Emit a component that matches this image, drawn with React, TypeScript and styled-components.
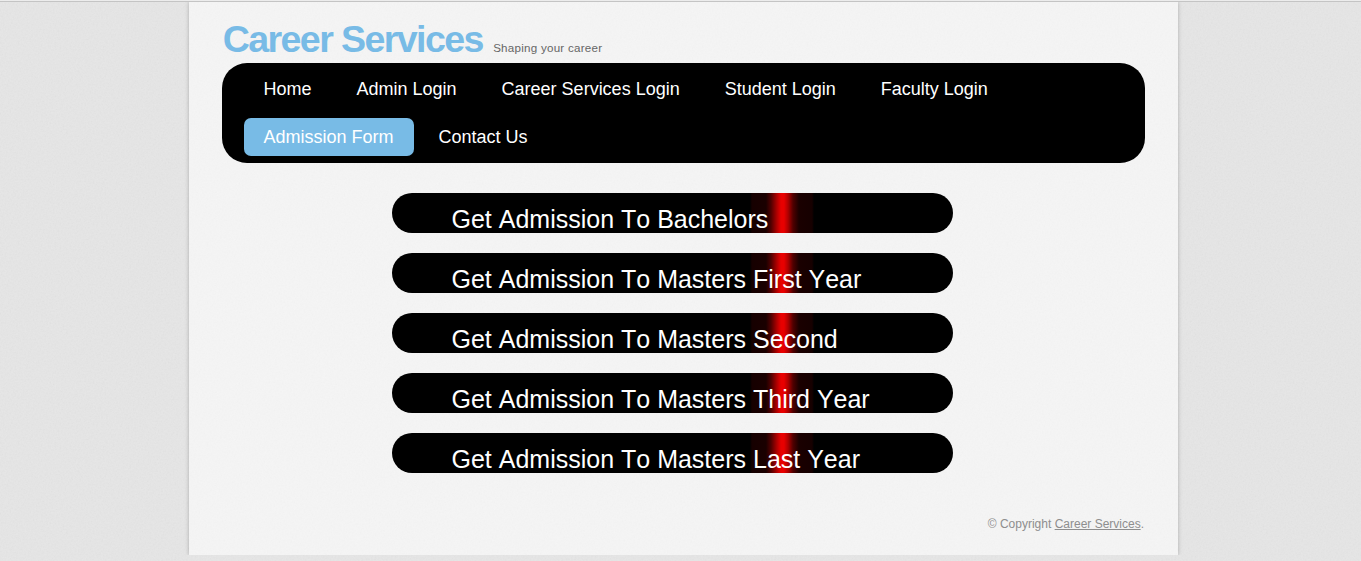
import React from "react";
import styled, { createGlobalStyle } from "styled-components";

const GlobalStyle = createGlobalStyle`
  * { box-sizing: border-box; }
  body {
    margin: 0;
    background: #e1e1e1;
    font-family: "Liberation Sans", Arial, sans-serif;
    overflow: hidden;
  }
`;

/* Fine paper grain tiled over the page background. */
const grain = (opacity: number) =>
  `url("data:image/svg+xml,%3Csvg xmlns='http://www.w3.org/2000/svg' width='200' height='200'%3E%3Cfilter id='n'%3E%3CfeTurbulence type='fractalNoise' baseFrequency='0.6' numOctaves='2' stitchTiles='stitch'/%3E%3CfeColorMatrix type='saturate' values='0'/%3E%3C/filter%3E%3Crect width='200' height='200' filter='url(%23n)' opacity='${opacity}'/%3E%3C/svg%3E")`;

const Page = styled.div`
  height: 561px;
  border-top: 1px solid #ececec;
  background: ${grain(0.1)}, #e6e6e6;
`;

const Frame = styled.div`
  height: 560px;
  border-top: 1px solid #c4c4c4;
  display: flex;
  flex-direction: column;
  align-items: flex-start;
`;

const Sheet = styled.div`
  width: 989px;
  height: 553px;
  margin-left: 189px;
  padding: 0 33px;
  background: ${grain(0.05)}, #f5f5f5;
  box-shadow: 0 0 4px rgba(0, 0, 0, 0.25);
  clip-path: inset(0 -6px 0 -6px);
`;

const Header = styled.header`
  display: flex;
  align-items: baseline;
  height: 61px;
  padding: 15px 0 0 0.7px;
  line-height: 44px;
`;

const Title = styled.h1`
  margin: 0;
  font-size: 37.6px;
  font-kerning: none;
  letter-spacing: -1.6px;
  color: #78bbe6;
  white-space: nowrap;
`;

const Tagline = styled.span`
  margin-left: 10.3px;
  font-size: 11.6px;
  font-kerning: none;
  letter-spacing: 0.25px;
  color: #666;
`;

const Nav = styled.nav`
  display: flex;
  flex-wrap: wrap;
  align-content: flex-start;
  gap: 10px 5px;
  height: 100px;
  padding: 7px 22px;
  border-radius: 25px;
  background: #000;
`;

const NavItem = styled.a<{ $active?: boolean }>`
  height: 38px;
  padding: 0 20.5px 0 19.5px;
  border-radius: 7px;
  font-size: 18px;
  line-height: 39px;
  color: #fff;
  white-space: nowrap;
  background: ${(p) => (p.$active ? "#78bbe6" : "transparent")};
`;

const Options = styled.main`
  display: flex;
  flex-direction: column;
  gap: 20px;
  width: 561px;
  margin: 30px 0 0 170px;
`;

const Option = styled.a`
  height: 40px;
  padding-left: 59.5px;
  border-radius: 20px;
  overflow: hidden;
  font-size: 25px;
  font-kerning: none;
  line-height: 53px;
  color: #fff;
  white-space: nowrap;
  background: linear-gradient(90deg, #000 358px, #160000 360px, #1a0000 374px, #500000 379px,
    #b00000 385px, #e80000 389px, #e80000 392px, #b00000 396px, #500000 401px, #1a0000 407px,
    #160000 420px, #000 422px);
`;

const Footer = styled.footer`
  margin-top: 44px;
  padding-right: 1px;
  text-align: right;
  font-size: 12px;
  line-height: 14px;
  color: #8e8e8e;
`;

const FooterLink = styled.a`
  text-decoration: underline;
`;

const links = [
  "Home",
  "Admin Login",
  "Career Services Login",
  "Student Login",
  "Faculty Login",
  "Admission Form",
  "Contact Us",
];

const options = [
  "Get Admission To Bachelors",
  "Get Admission To Masters First Year",
  "Get Admission To Masters Second",
  "Get Admission To Masters Third Year",
  "Get Admission To Masters Last Year",
];

export default function App() {
  return (
    <>
      <GlobalStyle />
      <Page>
        <Frame>
          <Sheet>
            <Header>
              <Title>Career Services</Title>
              <Tagline>Shaping your career</Tagline>
            </Header>
            <Nav>
              {links.map((link) => (
                <NavItem key={link} $active={link === "Admission Form"}>
                  {link}
                </NavItem>
              ))}
            </Nav>
            <Options>
              {options.map((option) => (
                <Option key={option}>{option}</Option>
              ))}
            </Options>
            <Footer>
              © Copyright <FooterLink>Career Services</FooterLink>.
            </Footer>
          </Sheet>
        </Frame>
      </Page>
    </>
  );
}
